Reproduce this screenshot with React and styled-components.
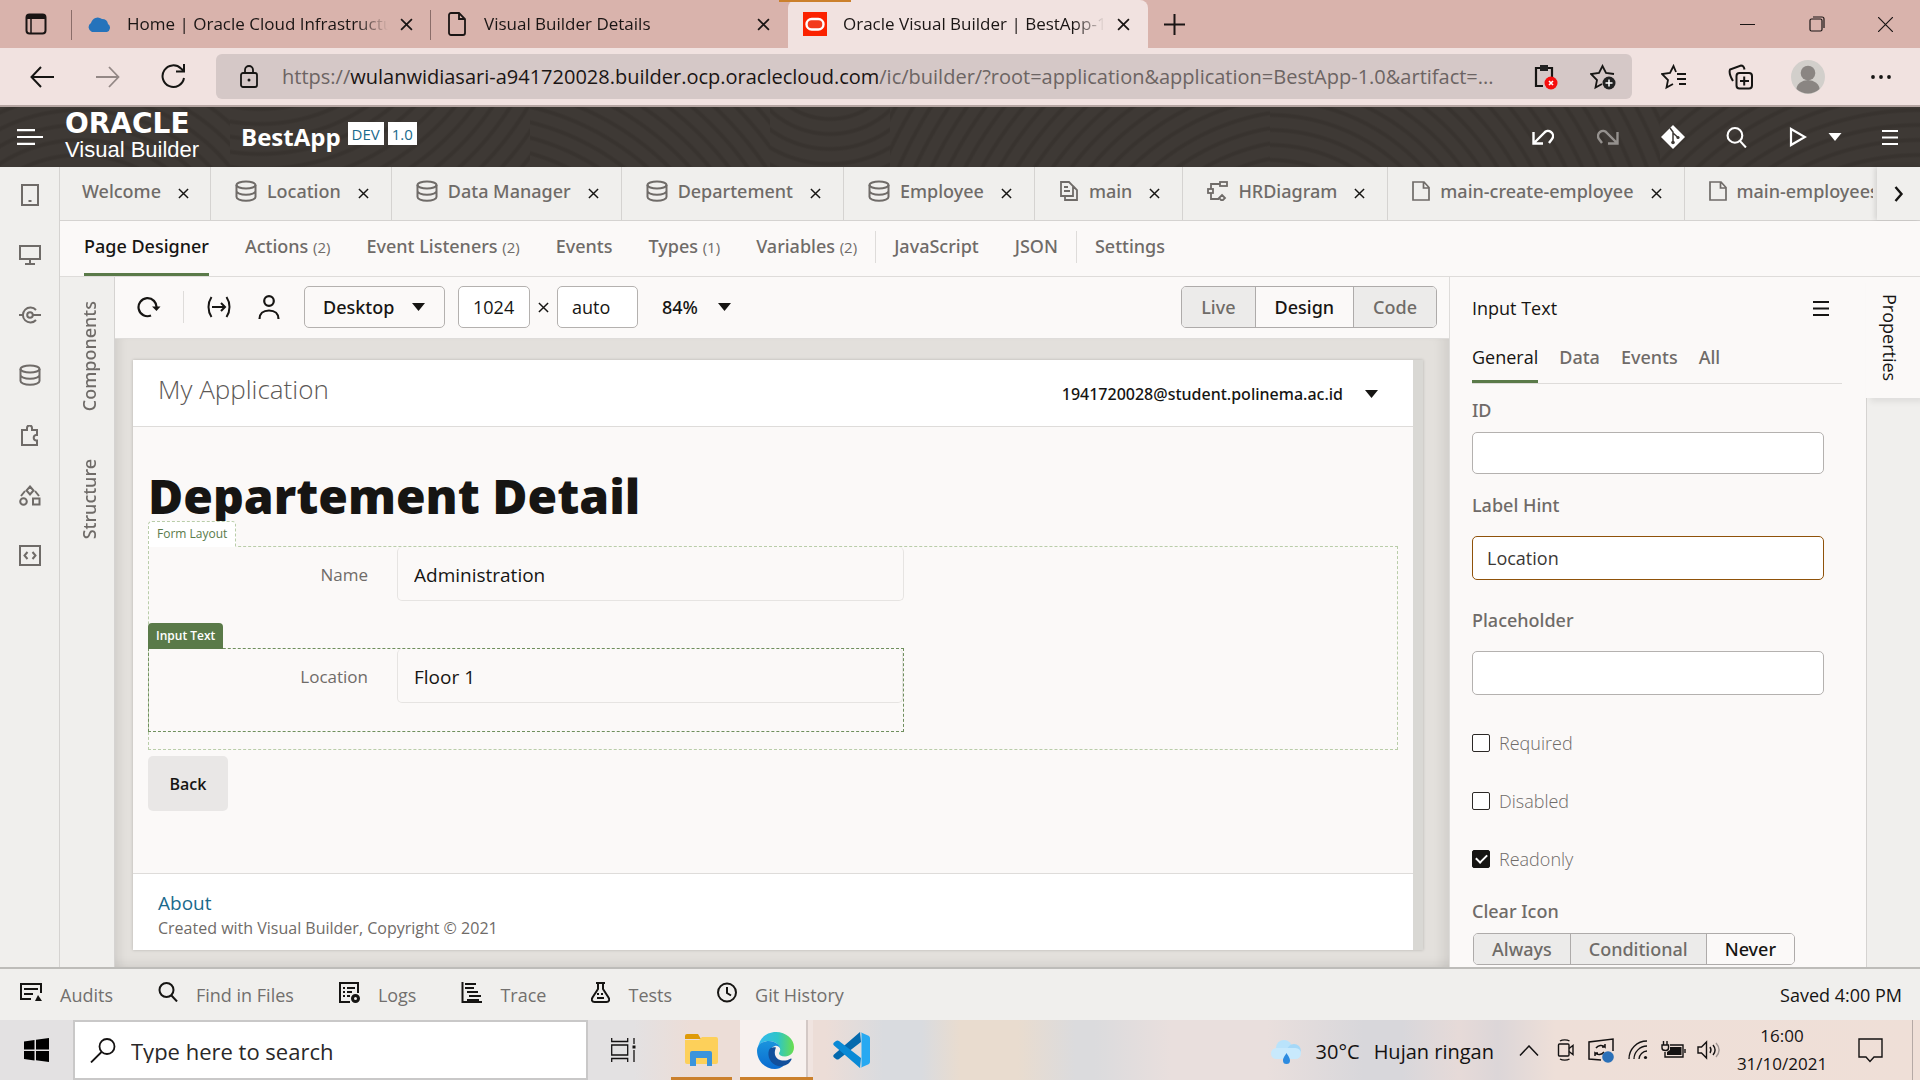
import React from "react";
import styled, { createGlobalStyle, css } from "styled-components";

const sans = `"Open Sans", "Noto Sans", sans-serif`;
const ink = "#161513";
const muted = "#6f6b68";
const line = "#dedcda";
const paper = "#fbf9f8";
const rail = "#f0efed";
const medium = css`
  font-family: "Noto Sans", sans-serif;
  font-weight: 500;
`;

const Global = createGlobalStyle`
  * { box-sizing: border-box; }
  body { margin: 0; font-family: ${sans}; font-size: 18px; line-height: 24px; color: ${ink}; background: ${rail}; }
  button, input, select { font: inherit; color: inherit; margin: 0; }
  svg { display: block; flex: none; }
`;

const Screen = styled.div`
  display: flex;
  flex-direction: column;
  height: 100vh;
  overflow: hidden;
`;

const Bare = styled.button`
  display: flex;
  align-items: center;
  justify-content: center;
  flex: none;
  padding: 0;
  border: 0;
  background: none;
  width: ${(p) => (p.$w ? `${p.$w}px` : "auto")};
  color: ${(p) => p.$color || "inherit"};
`;

/* ---------- icons ---------- */
function Icon({ w = 24, h, vb, sw = 2, children, ...rest }) {
  const hh = h || w;
  return (
    <svg width={w} height={hh} viewBox={vb || `0 0 ${w} ${hh}`} fill="none" stroke="currentColor" strokeWidth={sw} aria-hidden="true" {...rest}>
      {children}
    </svg>
  );
}
const X = ({ s = 12, sw = 1.6 }) => <Icon w={s} vb="0 0 12 12" sw={sw}><path d="M1 1l10 10M11 1L1 11" /></Icon>;
const Caret = ({ w = 13, h = 8 }) => <Icon w={w} h={h} vb="0 0 13 8"><path d="M0 0h13L6.500 8z" fill="currentColor" stroke="none" /></Icon>;
const Database = () => <Icon w={22}><ellipse cx="11" cy="5" rx="9.500" ry="3.600" /><path d="M1.500 5v12c0 2 4 3.700 9.500 3.700s9.500-1.700 9.500-3.700V5M1.500 11c0 2 4 3.700 9.500 3.700s9.500-1.700 9.500-3.700" /></Icon>;
const Page = () => <Icon w={18} h={20} sw={1.700}><path d="M1 1h11l5 5.500V19H1zM11.500 1v6H17" /></Icon>;
const Pages = () => <Icon w={20} h={20} sw={1.800}><path d="M2 1h8l4 4v10H2zM5 6h4M5 10h6M14 5l4 4v10H6v-4" /></Icon>;
const Diagram = () => <Icon w={21} h={20} sw={1.800}><rect x="13" y="1" width="7" height="4" /><path d="M13 3H4v5M4 12v6h8" /><rect x="1" y="8" width="5" height="4" /><path d="M15 14l3 3-3 3-3-3z" /></Icon>;
const Burger = () => <Icon w={16} h={15}><path d="M0 1h16M0 7.500h16M0 14h16" /></Icon>;
const Search = ({ s = 20 }) => <Icon w={s} vb="0 0 20 20"><circle cx="8.500" cy="8" r="7" /><path d="M13 13l6 6.500" /></Icon>;

/* ---------- browser ---------- */
const TabStrip = styled.div`
  display: flex;
  align-items: stretch;
  flex: none;
  height: 48px;
  background: #d9b3ac;
  font-size: 17px;
  color: #1a1514;
`;
const WorkspaceButton = styled(Bare)`
  width: 72px;
`;
const BrowserTab = styled.div`
  position: relative;
  display: flex;
  align-items: center;
  gap: 16px;
  width: ${(p) => p.$w}px;
  padding: 0 18px 0 15px;
  > button { margin-left: -4px; }
  ${(p) => p.$active ? css`
    background: #f1e2e0;
    border-radius: 8px 8px 0 0;
    &::before { content: ""; position: absolute; top: 0; left: -9px; width: 72px; height: 2px; background: #cb802c; }
  ` : css`
    &::before { content: ""; position: absolute; left: -1px; top: 10px; width: 1px; height: 30px; background: #8a6d69; }
  `}
`;
const BrowserTitle = styled.span`
  flex: 1;
  overflow: hidden;
  white-space: nowrap;
  mask-image: linear-gradient(to right, #000 calc(100% - 32px), transparent);
`;
const WindowButtons = styled.div`
  display: flex;
  margin-left: auto;
`;
const AddressBar = styled.div`
  display: flex;
  align-items: center;
  flex: none;
  height: 59px;
  padding-left: 8px;
  background: #f1e2e0;
  border-bottom: 2px solid #b5a5a2;
`;
const UrlBox = styled.div`
  display: flex;
  align-items: center;
  flex: 1;
  min-width: 0;
  height: 45px;
  margin: 0 8px 0 9px;
  padding-left: 24px;
  border-radius: 6px;
  background: #d5c8c7;
`;
const Url = styled.span`
  flex: 1;
  min-width: 0;
  margin-left: 24px;
  overflow: hidden;
  white-space: nowrap;
  font-size: 20px;
  line-height: 28px;
  color: #6c6463;
  b { font-weight: 400; color: #1a1514; }
`;

function Browser() {
  return (
    <>
      <TabStrip>
        <WorkspaceButton aria-label="Tab actions">
          <Icon w={22} h={22}><rect x="1.500" y="1.500" width="19" height="19" rx="3" /><path d="M2 4h18" strokeWidth="4" /><path d="M6 5v15" strokeWidth="1.500" /></Icon>
        </WorkspaceButton>
        <BrowserTab $w={359}>
          <svg width="24" height="16" viewBox="0 0 24 16"><path d="M5 16a5 5 0 0 1-1-9 7 7 0 0 1 11-4 6 6 0 0 1 6 5 4.500 4.500 0 0 1-1 8z" fill="#2573bb" /></svg>
          <BrowserTitle>Home | Oracle Cloud Infrastructure</BrowserTitle>
          <Bare aria-label="Close tab"><X s={13} /></Bare>
        </BrowserTab>
        <BrowserTab $w={357}>
          <Icon w={22} h={24} sw={1.800}><path d="M5 1h8l6 6v14a2 2 0 0 1-2 2H5a2 2 0 0 1-2-2V3a2 2 0 0 1 2-2zM13 1v6h6" /></Icon>
          <BrowserTitle>Visual Builder Details</BrowserTitle>
          <Bare aria-label="Close tab"><X s={13} /></Bare>
        </BrowserTab>
        <BrowserTab $w={360} $active>
          <svg width="24" height="24" viewBox="0 0 24 24"><path d="M0 0h24v24H0z" fill="#fb2200" /><rect x="3.500" y="7" width="17" height="10.500" rx="5.200" fill="#f33a1c" stroke="#fff" strokeWidth="2.400" /></svg>
          <BrowserTitle>Oracle Visual Builder | BestApp-1.0</BrowserTitle>
          <Bare aria-label="Close tab"><X s={13} /></Bare>
        </BrowserTab>
        <Bare $w={52} aria-label="New tab"><Icon w={21}><path d="M10.500 0v21M0 10.500h21" /></Icon></Bare>
        <WindowButtons>
          <Bare $w={69} aria-label="Minimize"><Icon w={15} sw={1}><path d="M0 7.500h15" /></Icon></Bare>
          <Bare $w={69} aria-label="Restore"><Icon w={16} sw={1.200}><rect x="1" y="3" width="12" height="12" rx="1.500" /><path d="M4 1h9a2 2 0 0 1 2 2v9" /></Icon></Bare>
          <Bare $w={69} aria-label="Close window"><Icon w={15} sw={1.200}><path d="M0 0l15 15M15 0L0 15" /></Icon></Bare>
        </WindowButtons>
      </TabStrip>
      <AddressBar>
        <Bare $w={67} aria-label="Back"><Icon w={24} h={22}><path d="M24 11H1.500M11 1L1.500 11 11 21" /></Icon></Bare>
        <Bare $w={65} $color="#948886" aria-label="Forward"><Icon w={24} h={22} sw={1.800}><path d="M0 11h22.500M13 1l9.500 10L13 21" /></Icon></Bare>
        <Bare $w={67} aria-label="Reload"><Icon w={25} h={25}><path d="M23 14a10.800 10.800 0 1 1-3-9.500L23 7M23 0v7.500h-8" /></Icon></Bare>
        <UrlBox>
          <Icon w={18} h={23} sw={1.800}><rect x="1" y="8" width="16" height="14" rx="2" /><path d="M5 8V5a4 4 0 0 1 8 0v3" /><circle cx="9" cy="15" r="1.500" fill="currentColor" stroke="none" /></Icon>
          <Url>https://<b>wulanwidiasari-a941720028.builder.ocp.oraclecloud.com</b>/ic/builder/?root=application&amp;application=BestApp-1.0&amp;artifact=...</Url>
          <Bare $w={56} aria-label="Clipboard blocked">
            <Icon w={24} h={26} sw={2.200}><path d="M9 22H2V4h16v9" /><path d="M6 1h8v6H6z" fill="#222" stroke="none" /><circle cx="17" cy="19" r="6.500" fill="#f50d0d" stroke="none" /><path d="M15 17l4 4m0-4l-4 4" stroke="#fff" strokeWidth="1.600" /></Icon>
          </Bare>
          <Bare $w={58} aria-label="Add to favorites">
            <Icon w={26} h={26} sw={1.800}><path d="M12 20l-6.500 3.500L7 16 1 10l8-1 3.500-7L16 9l8 1" /><circle cx="19" cy="19" r="6.500" fill="#222" stroke="none" /><path d="M19 15.500v7M15.500 19h7" stroke="#fff" strokeWidth="1.500" /></Icon>
          </Bare>
        </UrlBox>
        <Bare $w={67} aria-label="Favorites"><Icon w={26} h={26} sw={1.800}><path d="M12 20l-6.500 3.500L7 16 1 10l8-1 3.500-7L15 8M16 10h9M16 15h9M18 20h7" /></Icon></Bare>
        <Bare $w={67} aria-label="Collections"><Icon w={26} h={26} sw={2}><rect x="8.500" y="9" width="15.500" height="15.500" rx="3" /><path d="M16.200 12.500v9M12 17h9M5 17C2 12 1 8 2 5.500L13 1.500c2 0 3 1 3.500 4" /></Icon></Bare>
        <Bare $w={68} aria-label="Profile"><svg width="34" height="34" viewBox="0 0 34 34"><circle cx="17" cy="17" r="17" fill="#d2cfcb" /><circle cx="17" cy="13" r="7.300" fill="#8a8582" /><path d="M5.500 29a11.500 9 0 0 1 23 0 17 17 0 0 1-23 0z" fill="#8a8582" /></svg></Bare>
        <Bare $w={78} aria-label="Settings and more"><Icon w={20} h={4}><g fill="currentColor" stroke="none"><circle cx="2" cy="2" r="1.900" /><circle cx="10" cy="2" r="1.900" /><circle cx="18" cy="2" r="1.900" /></g></Icon></Bare>
      </AddressBar>
    </>
  );
}

/* ---------- application header ---------- */
const ring = (x, y) => `repeating-radial-gradient(circle at ${x} ${y}, transparent 0 9px, #38332f 11px 13px, transparent 15px)`;
const Header = styled.header`
  display: flex;
  align-items: center;
  flex: none;
  height: 60px;
  padding-left: 17px;
  color: #fff;
  background: ${ring("80px", "180px")} 0 0 / 230px 60px no-repeat, ${ring("10%", "-160px")} 230px 0 / 300px 60px no-repeat,
    ${ring("-60px", "260px")} 530px 0 / 240px 60px no-repeat, ${ring("50%", "-60px")} 770px 0 / 120px 60px no-repeat,
    ${ring("110%", "240px")} 890px 0 / 380px 60px no-repeat, ${ring("0", "200px")} 1270px 0 / 390px 60px no-repeat,
    ${ring("100%", "300px")} 1660px 0 / 260px 60px no-repeat, #3e3935;
`;
const Brand = styled.div`
  display: flex;
  flex-direction: column;
  width: 176px;
  margin-left: 22px;
`;
const BrandMark = styled.span`
  font-family: "DejaVu Sans", sans-serif;
  font-weight: 700;
  font-size: 28px;
  line-height: 26px;
`;
const BrandName = styled.span`
  font-family: "Liberation Sans", Arial, sans-serif;
  font-size: 22px;
  line-height: 26px;
`;
const AppName = styled.h1`
  margin: 0 7px 0 0;
  font-size: 24px;
  line-height: 32px;
  font-weight: 700;
`;
const Badge = styled.span`
  height: 23px;
  margin: 0 4px 7px 0;
  padding: 0 4px;
  background: #fff;
  color: #1a6a8c;
  font-size: 15px;
  line-height: 24px;
`;
const HeaderTools = styled.div`
  display: flex;
  margin-left: auto;
  > :last-child { margin-left: 18px; }
`;

function AppHeader() {
  return (
    <Header>
      <Bare $w={26} aria-label="Navigation"><Icon w={26} h={16} sw={2.200}><path d="M0 1.200h18M0 8h26M0 14.800h18" /></Icon></Bare>
      <Brand><BrandMark>ORACLE</BrandMark><BrandName>Visual Builder</BrandName></Brand>
      <AppName>BestApp</AppName>
      <Badge>DEV</Badge>
      <Badge>1.0</Badge>
      <HeaderTools>
        <Bare $w={65} aria-label="Undo"><Icon w={22} h={16} sw={2.400}><path d="M1.500 3v11.500H11M2 14L12 4a5 5 0 0 1 8 6l-3 4" /></Icon></Bare>
        <Bare $w={65} $color="#95918e" aria-label="Redo"><Icon w={22} h={16} sw={2.400}><path d="M20.500 3v11.500H11M20 14L10 4a5 5 0 0 0-8 6l3 4" /></Icon></Bare>
        <Bare $w={65} aria-label="Git"><Icon w={24}><path d="M12 0l12 12-12 12L0 12z" fill="#fff" stroke="none" /><path d="M9 3l3 4v10M12 8l5 4.500" stroke="#3e3935" strokeWidth="1.500" /><circle cx="12" cy="17.500" r="1.800" fill="#3e3935" stroke="none" /><circle cx="17" cy="12.500" r="1.600" fill="#3e3935" stroke="none" /></Icon></Bare>
        <Bare $w={63} aria-label="Search"><Search s={21} /></Bare>
        <Bare $w={60} aria-label="Preview"><Icon w={18} h={20} sw={2.200}><path d="M2 2l14 8-14 8z" /></Icon></Bare>
        <Bare $w={14} aria-label="Preview options"><Caret w={14} h={8} /></Bare>
        <Bare $w={60} aria-label="Menu"><Burger /></Bare>
      </HeaderTools>
    </Header>
  );
}

/* ---------- workspace ---------- */
const Workspace = styled.div`
  display: flex;
  flex: 1;
  min-height: 0;
`;
const SideRail = styled.nav`
  display: flex;
  flex-direction: column;
  flex: none;
  width: 60px;
  border-right: 1px solid #d5d3d1;
  background: ${rail};
  color: ${muted};
`;
const RailButton = styled(Bare)`
  height: 60px;
  &:first-child { height: 58px; padding-bottom: 2px; }
`;
const Work = styled.div`
  display: flex;
  flex-direction: column;
  flex: 1;
  min-width: 0;
`;
const FileTabs = styled.div`
  display: flex;
  flex: none;
  height: 54px;
  background: ${rail};
  border-bottom: 1px solid #d5d3d1;
`;
const FileTabList = styled.div`
  display: flex;
  flex: 1;
  min-width: 0;
  overflow: hidden;
`;
const FileTab = styled.div`
  display: flex;
  align-items: center;
  flex: none;
  padding: 0 ${(p) => (p.$plain ? "21px 6px 22px" : "22px 6px 24px")};
  border-right: 1px solid #d5d3d1;
  color: ${muted};
  ${medium}
  white-space: nowrap;
  > svg { margin-right: 10px; }
  > button { margin: 6px 0 0 17px; color: ${ink}; }
`;
const Scroller = styled(Bare)`
  width: 43px;
  margin-left: 4px;
  box-shadow: -2px 0 5px #0000001f;
`;
const ViewTabs = styled.nav`
  display: flex;
  align-items: flex-start;
  flex: none;
  height: 56px;
  padding: 0 24px;
  gap: 36px;
  background: ${paper};
  border-bottom: 1px solid ${line};
`;
const ViewTab = styled.button`
  padding: 13px 0 15px;
  border: 0;
  border-bottom: 3px solid ${(p) => (p.$active ? "#5a7a49" : "transparent")};
  background: none;
  color: ${(p) => (p.$active ? ink : muted)};
  ${medium}
  white-space: nowrap;
  small { font-family: ${sans}; font-size: 15px; font-weight: 400; }
`;
const Rule = styled.span`
  width: 1px;
  height: 32px;
  margin: ${(p) => p.$m || "0"};
  background: ${line};
`;
const Panels = styled.div`
  display: flex;
  flex: 1;
  min-height: 0;
`;
const Drawer = styled.div`
  display: flex;
  flex-direction: column;
  align-items: center;
  gap: 48px;
  flex: none;
  width: 55px;
  padding: 24px 0 0 4px;
  background: ${rail};
  border-right: 1px solid #d5d3d1;
`;
const DrawerTab = styled.button`
  padding: 0;
  border: 0;
  background: none;
  writing-mode: vertical-rl;
  transform: rotate(180deg);
  color: ${muted};
  ${medium}
`;
const Editor = styled.section`
  display: flex;
  flex-direction: column;
  flex: 1;
  min-width: 0;
`;
const Toolbar = styled.div`
  display: flex;
  align-items: center;
  flex: none;
  height: 62px;
  padding: 0 12px 1px 0;
  background: ${paper};
  border-bottom: 1px solid ${line};
`;
const SelectWrap = styled.label`
  position: relative;
  display: flex;
  align-items: center;
  width: ${(p) => p.$w}px;
  height: 42px;
  ${(p) => p.$boxed && css`border: 1px solid #b4b1af; border-radius: 5px; margin: 0 13px 0 20px;`}
  > svg { position: absolute; right: ${(p) => (p.$boxed ? 19 : 10)}px; pointer-events: none; }
`;
const Select = styled.select`
  appearance: none;
  width: 100%;
  padding: 0 38px 0 ${(p) => p.$pad}px;
  border: 0;
  background: transparent;
  ${medium}
`;
const SizeInput = styled.input`
  width: ${(p) => p.$w}px;
  height: 42px;
  padding: 0 14px;
  border: 1px solid #b4b1af;
  border-radius: 5px;
  background: #fff;
`;
const Times = styled.span`
  display: flex;
  justify-content: center;
  width: 27px;
`;
const Segment = styled.button`
  padding: 0 18px;
  border: 0;
  border-left: 1px solid #aeabaa;
  background: ${(p) => (p.$on ? paper : "#ecebea")};
  color: ${(p) => (p.$on ? ink : muted)};
  ${medium}
  &:first-child { border-left: 0; }
`;
const Segmented = styled.div`
  display: flex;
  align-self: ${(p) => (p.$small ? "flex-start" : "center")};
  height: ${(p) => (p.$small ? 32 : 42)}px;
  margin-left: ${(p) => (p.$small ? "1px" : "auto")};
  border: 1px solid #aeabaa;
  border-radius: 5px;
  overflow: hidden;
  > button { padding: 0 ${(p) => (p.$small ? 18 : 19)}px; }
`;
const Canvas = styled.div`
  display: flex;
  flex: 1;
  min-height: 0;
  padding: 21px 26px 17px 18px;
  background: #e3e0dc;
  box-shadow: inset 10px 0 10px -6px #00000014, inset -14px 0 12px -8px #00000014, inset 0 -12px 10px -8px #00000010;
`;
const Frame = styled.div`
  display: flex;
  flex-direction: column;
  flex: 1;
  border-right: 10px solid #d9d8d4;
  background: ${paper};
  box-shadow: 0 0 3px #00000033;
`;
const FrameHead = styled.div`
  display: flex;
  justify-content: space-between;
  flex: none;
  height: 67px;
  padding: 0 34px 0 25px;
  background: #fff;
  border-bottom: 1px solid ${line};
`;
const FrameTitle = styled.span`
  padding-top: 12px;
  font-size: 26px;
  line-height: 34px;
  font-weight: 300;
  color: #5c5856;
`;
const User = styled(Bare)`
  gap: 21px;
  padding-top: 1px;
  font-size: 16px;
  ${medium}
`;
const FrameBody = styled.div`
  flex: 1;
  padding: 36px 15px 0;
`;
const Title = styled.h2`
  margin: 0;
  height: 83px;
  font-size: 48px;
  line-height: 66px;
  font-weight: 800;
  white-space: nowrap;
`;
const FormOutline = styled.div`
  position: relative;
  height: 204px;
  border: 1px dashed #b9cda9;
`;
const Tag = styled.span`
  position: absolute;
  left: -1px;
  bottom: 100%;
  height: 26px;
  padding: 0 8px;
  border-radius: 4px 4px 0 0;
  font-size: 12px;
  line-height: 26px;
  white-space: nowrap;
  ${(p) => p.$solid ? css`background: #5a7a49; color: #fff; font-weight: 600;` : css`background: #fff; color: #5a7a49; border: 1px dashed #b9cda9; border-bottom: 0; line-height: 24px;`}
`;
const FormRow = styled.div`
  position: relative;
  display: flex;
  width: 756px;
  height: ${(p) => (p.$selected ? 84 : 101)}px;
  margin-left: -1px;
  padding-left: 1px;
  ${(p) => p.$selected && css`border: 1px dashed #6f8f5d; padding-left: 0;`}
`;
const RowLabel = styled.label`
  width: 219px;
  padding-top: 16px;
  text-align: right;
  color: ${muted};
  font-size: 17px;
`;
const RowValue = styled.input`
  flex: 1;
  height: 54px;
  min-width: 0;
  margin-left: 29px;
  padding: 3px 16px 0;
  border: 1px solid #e6e4e2;
  border-top: 0;
  border-radius: 5px;
  background: transparent;
  font-size: 19px;
`;
const BackButton = styled.button`
  display: block;
  width: 80px;
  height: 55px;
  margin-top: 6px;
  border: 0;
  border-radius: 5px;
  background: #e9e7e6;
  font-size: 16px;
  font-weight: 600;
`;
const FrameFoot = styled.div`
  flex: none;
  height: 77px;
  padding: 16px 25px 0;
  background: #fff;
  border-top: 1px solid ${line};
  font-size: 16px;
  color: ${muted};
  a { display: block; width: max-content; font-size: 19px; line-height: 26px; color: #1a6a8c; text-decoration: none; }
`;

/* ---------- properties ---------- */
const Properties = styled.aside`
  flex: none;
  width: 417px;
  padding: 19px 24px 0 22px;
  border-left: 1px solid ${line};
  background: ${paper};
  overflow: hidden;
`;
const PropHead = styled.div`
  display: flex;
  align-items: center;
  justify-content: space-between;
  padding-right: 13px;
`;
const PropTabs = styled.div`
  display: flex;
  gap: 21px;
  margin: 24px 0 14px;
  border-bottom: 1px solid ${line};
`;
const PropTab = styled.button`
  height: 39px;
  padding: 0 0 10px;
  border: 0;
  border-bottom: 3px solid ${(p) => (p.$active ? "#5a7a49" : "transparent")};
  background: none;
  color: ${(p) => (p.$active ? ink : muted)};
  ${(p) => !p.$active && medium}
`;
const Field = styled.div`
  display: flex;
  flex-direction: column;
  gap: ${(p) => (p.$roomy ? 19 : 10)}px;
  margin-bottom: ${(p) => p.$mb}px;
  color: ${muted};
  ${medium}
  > input {
    width: 352px;
    height: ${(p) => (p.$roomy ? 44 : 42)}px;
    padding: 0 14px;
    border: 1px solid ${(p) => (p.$changed ? "#8f520a" : "#b4b1af")};
    border-radius: 5px;
    background: #fff;
    color: #3b3836;
    font-family: ${sans};
    font-weight: 400;
  }
`;
const Check = styled.label`
  display: flex;
  align-items: center;
  gap: 9px;
  height: 24px;
  margin-bottom: ${(p) => p.$mb || 34}px;
  color: ${muted};
  font-weight: 300;
  input {
    appearance: none;
    display: grid;
    place-items: center;
    width: 18px;
    height: 18px;
    margin: 0;
    border: 1px solid #2b2826;
    border-radius: 2px;
    background: #fff;
  }
  input:checked { background: ${ink}; border-color: ${ink}; }
  input:checked::after { content: ""; width: 5px; height: 9px; margin-bottom: 3px; border: solid #fff; border-width: 0 2px 2px 0; transform: rotate(45deg); }
`;
const PropRail = styled.div`
  flex: none;
  width: 54px;
  background: ${rail};
  border-left: 1px solid #d5d3d1;
`;
const PropRailTab = styled.button`
  display: flex;
  align-items: center;
  justify-content: center;
  width: 54px;
  height: 121px;
  margin-left: -1px;
  padding: 0 6px 0 0;
  border: 0;
  background: ${paper};
  box-shadow: 4px 4px 6px #00000012;
  writing-mode: vertical-rl;
`;

/* ---------- bottom bar and taskbar ---------- */
const StatusBar = styled.footer`
  display: flex;
  align-items: center;
  gap: 45px;
  flex: none;
  height: 53px;
  padding: 0 18px 0 20px;
  border-top: 2px solid #bdbcb9;
  background: ${rail};
`;
const StatusTab = styled(Bare)`
  gap: 18px;
  color: #72706e;
  svg { color: ${ink}; margin-bottom: 5px; }
`;
const Saved = styled.span`
  margin-left: auto;
`;
const Taskbar = styled.div`
  display: flex;
  align-items: stretch;
  flex: none;
  height: 60px;
  background: linear-gradient(to right, #e3e1e2 0 33%, #ecddd7 36% 43%, #d9dbdf 46% 48%, #e9dccf 50% 53%, #dbdbdd 56% 57%, #e9dfdd 61% 66%, #d8d7db 71% 73%, #e6dad8 76%, #dcd6d8 78%, #eedfd8 81%, #efdfd7);
  font-size: 20px;
  color: #141212;
`;
const SearchBox = styled.label`
  display: flex;
  align-items: center;
  flex: none;
  gap: 15px;
  width: 515px;
  padding-left: 15px;
  border: 2px solid #c9c8c8;
  background: #fff;
  input { flex: 1; min-width: 0; padding: 2px 0 0; border: 0; outline: 0; background: none; font-size: 22px; }
  input::placeholder { color: #2a2828; opacity: 1; }
`;
const Task = styled(Bare)`
  width: ${(p) => p.$w}px;
  margin-right: ${(p) => p.$gap || 0}px;
  border-bottom: 3px solid ${(p) => (p.$open ? "#cb802c" : "transparent")};
  background: ${(p) => (p.$focus ? "linear-gradient(to right, #f7f1ef 66px, #d3c8c5 66px 68px, #f0e4e0 68px)" : "none")};
  padding: 3px ${(p) => (p.$focus ? 2 : 0)}px 0 0;
`;
const Tray = styled.div`
  display: flex;
  align-items: center;
  margin-left: auto;
`;
const Weather = styled(Bare)`
  gap: 14px;
  margin-right: 25px;
  padding-top: 4px;
`;
const Clock = styled.div`
  display: flex;
  flex-direction: column;
  align-items: center;
  width: 92px;
  font-size: 17px;
  line-height: 28px;
`;
const ShowDesktop = styled.span`
  align-self: stretch;
  width: 8px;
  border-left: 1px solid #b5a9a5;
`;

const files = [
  ["Welcome", null], ["Location", Database], ["Data Manager", Database], ["Departement", Database], ["Employee", Database],
  ["main", Pages], ["HRDiagram", Diagram], ["main-create-employee", Page], ["main-employees", Page],
];

const railIcons = [
  ["Mobile", <Icon w={18} h={22} key="i"><rect x="1" y="1" width="16" height="20" /><path d="M7.500 17h3" /></Icon>],
  ["Web", <Icon w={22} h={20} key="i"><rect x="1" y="1" width="20" height="13" /><path d="M11 14v5M6 19h10" /></Icon>],
  ["Services", <Icon w={22} h={18} key="i"><path d="M17 4a7.500 7.500 0 1 0 0 10" /><circle cx="11" cy="9" r="2.800" /><path d="M0 9h4M14 9h8" /></Icon>],
  ["Data", <Database key="i" />],
  ["Components", <Icon w={20} h={21} key="i"><path d="M2 5h5V3a2.500 2.500 0 0 1 5 0v2h5v5h-1a2.800 2.800 0 0 0 0 5.500h1V20H2z" /></Icon>],
  ["Processes", <Icon w={22} h={21} key="i"><path d="M11 1.500l3.500 4-3.500 4-3.500-4zM6 6l-4 5M16 6l4 5" /><circle cx="4.500" cy="16.500" r="3.300" /><rect x="14" y="13.500" width="6.500" height="6" /></Icon>],
  ["Source", <Icon w={22} h={21} key="i"><rect x="1" y="1" width="20" height="19" /><path d="M8.500 7L5.500 10.500l3 3.500M13.500 7l3 3.500-3 3.500" /></Icon>],
];

const tools = [
  ["Audits", <Icon w={22} h={20} key="i"><path d="M11 17H1V2h20v9M4 7h14M4 12h9" /><path d="M18 13l4 6h-7z" fill="currentColor" stroke="none" /></Icon>],
  ["Find in Files", <Search key="i" />],
  ["Logs", <Icon w={21} h={21} key="i"><path d="M11 20H1V1h18v10M4 6h2M8 6h8M4 10h2M8 10h5M4 14h2M8 14h3" /><circle cx="16.500" cy="16.500" r="3" strokeWidth="3" /></Icon>],
  ["Trace", <Icon w={21} h={21} key="i"><path d="M1.500 0v20H21M4 2h11M4 6h9M6 10h11M8 14h12M6 18h12" /></Icon>],
  ["Tests", <Icon w={19} h={21} key="i"><path d="M5 1h9M7 1v6L1.500 15.500C0 18 1 20 3.500 20h12c2.500 0 3.500-2 2-4.500L12 7V1M6 12h2M10 12h2M6 16h7" /></Icon>],
  ["Git History", <Icon w={20} h={21} key="i"><circle cx="10" cy="10.500" r="9" /><path d="M10 5v6l4 2.500" /></Icon>],
];

export default function App() {
  return (
    <Screen>
      <Global />
      <Browser />
      <AppHeader />
      <Workspace>
        <SideRail>
          {railIcons.map(([name, icon]) => <RailButton key={name} aria-label={name}>{icon}</RailButton>)}
        </SideRail>
        <Work>
          <FileTabs>
            <FileTabList>
              {files.map(([name, I]) => (
                <FileTab key={name} $plain={!I}>{I && <I />}{name}<Bare aria-label={`Close ${name}`}><X s={11} /></Bare></FileTab>
              ))}
            </FileTabList>
            <Scroller aria-label="More tabs"><Icon w={10} h={16} sw={2.400}><path d="M1.500 1l6 7-6 7" /></Icon></Scroller>
          </FileTabs>
          <ViewTabs>
            <ViewTab $active>Page Designer</ViewTab>
            <ViewTab>Actions <small>(2)</small></ViewTab>
            <ViewTab>Event Listeners <small>(2)</small></ViewTab>
            <ViewTab>Events</ViewTab>
            <ViewTab>Types <small>(1)</small></ViewTab>
            <ViewTab>Variables <small>(2)</small></ViewTab>
            <Rule $m="10px -18px 0" />
            <ViewTab>JavaScript</ViewTab>
            <ViewTab>JSON</ViewTab>
            <Rule $m="10px -18px 0" />
            <ViewTab>Settings</ViewTab>
          </ViewTabs>
          <Panels>
            <Drawer><DrawerTab>Components</DrawerTab><DrawerTab>Structure</DrawerTab></Drawer>
            <Editor>
              <Toolbar>
                <Bare $w={68} aria-label="Refresh"><Icon w={24} h={21} sw={2.200}><path d="M14 18.500A9 9 0 1 1 19.500 11" /><path d="M15 9.500h8.500L19.500 14z" fill="currentColor" stroke="none" /></Icon></Bare>
                <Rule />
                <Bare $w={70} aria-label="Fit width"><Icon w={24} h={22}><path d="M4.500 1C.5 7 .5 15 4.500 21M19.500 1c4 6 4 14 0 20M5 11h13M14 7l4 4-4 4" /></Icon></Bare>
                <Bare $w={30} aria-label="Role"><Icon w={22} h={24} sw={2.200}><circle cx="11" cy="6" r="4.800" /><path d="M1.500 24c0-5 3.500-8.500 9.500-8.500s9.500 3.500 9.500 8.500" /></Icon></Bare>
                <SelectWrap $w={141} $boxed><Select $pad={18} aria-label="Device" defaultValue="Desktop"><option>Desktop</option></Select><Caret /></SelectWrap>
                <SizeInput $w={72} aria-label="Width" defaultValue="1024" />
                <Times><X s={11} /></Times>
                <SizeInput $w={81} aria-label="Height" defaultValue="auto" />
                <SelectWrap $w={103}><Select $pad={24} aria-label="Zoom" defaultValue="84%"><option>84%</option></Select><Caret /></SelectWrap>
                <Segmented><Segment>Live</Segment><Segment $on>Design</Segment><Segment>Code</Segment></Segmented>
              </Toolbar>
              <Canvas>
                <Frame>
                  <FrameHead>
                    <FrameTitle>My Application</FrameTitle>
                    <User>1941720028@student.polinema.ac.id<Caret w={15} h={8} /></User>
                  </FrameHead>
                  <FrameBody>
                    <Title>Departement Detail</Title>
                    <FormOutline>
                      <Tag>Form Layout</Tag>
                      <FormRow><RowLabel htmlFor="name">Name</RowLabel><RowValue id="name" readOnly value="Administration" /></FormRow>
                      <FormRow $selected><Tag $solid>Input Text</Tag><RowLabel htmlFor="location">Location</RowLabel><RowValue id="location" readOnly value="Floor 1" /></FormRow>
                    </FormOutline>
                    <BackButton>Back</BackButton>
                  </FrameBody>
                  <FrameFoot><a href="#about">About</a>Created with Visual Builder, Copyright © 2021</FrameFoot>
                </Frame>
              </Canvas>
            </Editor>
            <Properties>
              <PropHead>Input Text<Bare aria-label="Component menu"><Burger /></Bare></PropHead>
              <PropTabs><PropTab $active>General</PropTab><PropTab>Data</PropTab><PropTab>Events</PropTab><PropTab>All</PropTab></PropTabs>
              <Field $mb={19}><label htmlFor="pid">ID</label><input id="pid" /></Field>
              <Field $roomy $changed $mb={28}><label htmlFor="hint">Label Hint</label><input id="hint" defaultValue="Location" /></Field>
              <Field $roomy $mb={36}><label htmlFor="ph">Placeholder</label><input id="ph" /></Field>
              <Check><input type="checkbox" />Required</Check>
              <Check><input type="checkbox" />Disabled</Check>
              <Check $mb={28}><input type="checkbox" defaultChecked />Readonly</Check>
              <Field $mb={0}><span>Clear Icon</span><Segmented $small><Segment>Always</Segment><Segment>Conditional</Segment><Segment $on>Never</Segment></Segmented></Field>
            </Properties>
            <PropRail><PropRailTab>Properties</PropRailTab></PropRail>
          </Panels>
        </Work>
      </Workspace>
      <StatusBar>
        {tools.map(([name, icon]) => <StatusTab key={name}>{icon}{name}</StatusTab>)}
        <Saved>Saved 4:00 PM</Saved>
      </StatusBar>
      <Taskbar>
        <Bare $w={73} aria-label="Start"><svg width="25" height="24" viewBox="0 0 25 24"><path d="M0 3.500L10.500 2v9.500H0zM12 1.800L25 0v11.500H12zM0 13h10.500v9.500L0 21zM12 13h13v11l-13-1.800z" /></svg></Bare>
        <SearchBox><Icon w={26} h={25} sw={1.800}><circle cx="17" cy="8.500" r="7.500" /><path d="M11.500 14L1 24.500" /></Icon><input aria-label="Search" placeholder="Type here to search" /></SearchBox>
        <Task $w={71} $gap={12} aria-label="Task view"><Icon w={25} h={24} sw={1.300}><path d="M.7 0v3.500h16V0M.7 24v-3.500h16V24M.7 7h16v10H.7zM23 0v6M23 12v12" /><path d="M23 7.500v3" strokeWidth="3" /></Icon></Task>
        <Task $w={61} $gap={8} $open aria-label="File Explorer">
          <svg width="33" height="32" viewBox="0 0 33 32"><path d="M0 2a2 2 0 0 1 2-2h11l3 5H0z" fill="#df9a08" /><path d="M0 6h14l3-3h14a2 2 0 0 1 2 2v23a2 2 0 0 1-2 2H2a2 2 0 0 1-2-2z" fill="#fdd05a" /><path d="M5 32V19a2 2 0 0 1 2-2h18a2 2 0 0 1 2 2v13h-5v-8H11v8z" fill="#3b94dc" /></svg>
        </Task>
        <Task $w={73} $open $focus aria-label="Microsoft Edge">
          <svg width="37" height="37" viewBox="0 0 37 37">
            <defs>
              <linearGradient id="e1" x1="0" x2="1"><stop stopColor="#35b8f1" /><stop offset=".55" stopColor="#2ec5c8" /><stop offset="1" stopColor="#6ade4c" /></linearGradient>
              <linearGradient id="e2" x1="0" x2="0" y1="0" y2="1"><stop stopColor="#1a94dd" /><stop offset="1" stopColor="#0a6bd0" /></linearGradient>
            </defs>
            <path d="M1 16C2 6 10 0 19 0c10 0 18 7 18 15 0 6-4 9.500-9 9.500-4 0-6-1.500-6-3 0-1 1.200-1.500 1.200-4C23 13 18 9 12 9 6 9 2 12 1 16z" fill="url(#e1)" />
            <path d="M0 18.500C.5 12 6 9 12 9c6 0 11 4 11.200 7.500C22 14.500 20 13.500 18 14c-6 1.500-7 8-3 14 3 4.500 8 6 12 5.500-3 2.500-6 3.500-9 3.500C8 37 0 29 0 18.500z" fill="url(#e2)" />
            <path d="M12 18c-2 6 1 14 9 16 5 1 11-1 13.500-6.500.3-.8-.4-1.200-1-.8-6 3.500-14 2-15.500-4C17.500 20 18 18 19 15.500c-3-.5-6 0-7 2.500z" fill="#124f9c" />
          </svg>
        </Task>
        <Task $w={76} aria-label="Visual Studio Code">
          <svg width="37" height="36" viewBox="0 0 37 36"><path d="M27 0L1 22.500c-1 1-1 2 0 3L3 27c1 .8 2 .7 3 0L28 10z" fill="#0469ad" /><path d="M27 36L1 13.500c-1-1-1-2 0-3L3 9c1-.8 2-.7 3 0l22 17z" fill="#0a8ad6" /><path d="M27 0l8 3.500c1.500.7 2 1.500 2 3v23c0 1.500-.5 2.300-2 3L27 36c1-.5 1.500-1 1.500-2V2c0-1-.5-1.500-1.500-2z" fill="#27a9f2" /></svg>
        </Task>
        <Tray>
          <Weather>
            <svg width="31" height="24" viewBox="0 0 31 24"><circle cx="13" cy="8" r="8" fill="#b9e3fb" /><circle cx="23" cy="11" r="7" fill="#a5d8f8" /><rect y="8" width="30" height="11" rx="5.500" fill="#c8e9fc" /><path d="M15.500 13c2.500 4 3.500 5.500 3.500 7.500a3.500 3.500 0 0 1-7 0c0-2 1-3.500 3.500-7.500z" fill="#2c8be0" /></svg>
            <span>30°C</span><span>Hujan ringan</span>
          </Weather>
          <Bare $w={20} aria-label="Hidden icons"><Icon w={20} h={11} sw={1.500}><path d="M1 10.500l9-9.500 9 9.500" /></Icon></Bare>
          <Bare $w={53} aria-label="Camera"><Icon w={18} h={22} sw={1.400}><rect x="1.500" y="5" width="10.500" height="12" rx="1" /><path d="M12 9.500l4-3v9l-4-3M3 2c2.500-1.500 7-1.500 9.500 0M3 20c2.500 1.500 7 1.500 9.500 0" /></Icon></Bare>
          <Bare $w={18} aria-label="Update"><Icon w={26} h={25} sw={1.500}><path d="M13 22L1 21V4l24-3v12M8 10a6 6 0 0 1 9-1V6M17 9h-3M16 14a6 6 0 0 1-9 1v3M7 15h3" /><circle cx="20" cy="19" r="5.800" fill="#2a70b8" stroke="none" /></Icon></Bare>
          <Bare $w={55} aria-label="Network"><Icon w={20} h={20} sw={1.300}><path d="M1 19C1 9 9 1 19 1M6 19C6 12 12 6 19 6M11 19c0-4 4-8 8-8" /><circle cx="17.500" cy="17.500" r="1.600" fill="currentColor" stroke="none" /></Icon></Bare>
          <Bare $w={16} aria-label="Battery"><Icon w={25} h={18} sw={1.400}><path d="M9 4h13v12H4v-5M24 8v4" /><path d="M9 6h11.500v8H6v-3l3-2z" fill="currentColor" stroke="none" /><path d="M2.500 0v4M6 0v4M1 4h6.500v3c0 2-1.500 2.500-3 2.500S1 9 1 7z" /></Icon></Bare>
          <Bare $w={55} aria-label="Volume"><Icon w={23} h={20} sw={1.400}><path d="M1 7h3.500L9.500 2v16l-5-5H1zM13 7c1.300 2 1.300 4 0 6M16 5c2.500 3 2.500 7 0 10" /><path d="M19 3c4 4.500 4 9.500 0 14" stroke="#a09693" /></Icon></Bare>
          <Clock><span>16:00</span><span>31/10/2021</span></Clock>
          <Bare $w={84} aria-label="Notifications"><Icon w={25} h={25} sw={1.400}><path d="M1 1h23v18h-8l-4 4.500L8 19H1z" /></Icon></Bare>
          <ShowDesktop />
        </Tray>
      </Taskbar>
    </Screen>
  );
}
